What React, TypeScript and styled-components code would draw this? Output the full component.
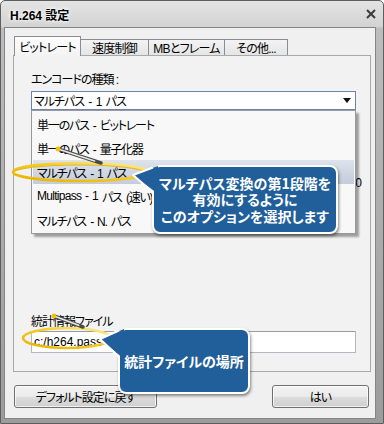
import styled, { createGlobalStyle } from "styled-components";

const GlobalStyle = createGlobalStyle`
  html, body { margin: 0; padding: 0; background: #ffffff; }
  body {
    font-family: "Liberation Sans", "Noto Sans CJK JP", sans-serif;
    font-size: 12px;
    color: #000;
    font-feature-settings: "palt";
  }
  * { box-sizing: border-box; }
`;

const Window = styled.div`
  position: relative;
  width: 384px;
  height: 424px;
  display: flex;
  flex-direction: column;
  border: 1px solid #5e5e5e;
  border-radius: 5px 5px 0 0;
  padding: 0 7px 4px 3px;
  background: linear-gradient(#e4e4e4 0, #d2d2d2 26px, #bdbdbd 27px, #9c9c9c 100%);
  overflow: hidden;
`;

const TitleBar = styled.div`
  height: 26px;
  display: flex;
  align-items: center;
  justify-content: space-between;
  padding-left: 6px;
`;

const Title = styled.span`
  font-weight: bold;
  font-size: 12px;
  text-shadow: 0 0 5px #fff, 0 0 3px #fff;
`;

const Client = styled.div`
  flex: 1;
  display: flex;
  flex-direction: column;
  background: #f0f0f0;
  border: 1px solid #858585;
  padding: 8px 4px 0 8px;
`;

const TabRow = styled.div`
  height: 19px;
  display: flex;
  align-items: flex-end;
`;

const Tab = styled.div<{ $active?: boolean; $w: number }>`
  position: relative;
  z-index: ${(p) => (p.$active ? 2 : 1)};
  width: ${(p) => p.$w}px;
  height: ${(p) => (p.$active ? 20 : 16)}px;
  margin-bottom: ${(p) => (p.$active ? -1 : 0)}px;
  margin-left: -1px;
  display: flex;
  align-items: center;
  justify-content: center;
  letter-spacing: -0.8px;
  border: 1px solid #898c95;
  border-bottom: none;
  background: ${(p) =>
    p.$active
      ? "linear-gradient(#fdfdfd, #f3f3f3)"
      : "linear-gradient(#f3f3f3, #e5e5e5)"};
  color: #000;
  &:first-child { margin-left: 1px; }
`;

const Panel = styled.div`
  position: relative;
  height: 317px;
  display: flex;
  flex-direction: column;
  border: 1px solid #a9a9a9;
  background: #f2f2f2;
  padding: 17px 14px 18px 17px;
`;

const FieldLabel = styled.div`
  height: 15px;
  line-height: 15px;
  letter-spacing: -1px;
`;

const ComboWrap = styled.div`
  position: relative;
  margin-top: 3px;
`;

const Combo = styled.div`
  height: 19px;
  display: flex;
  align-items: center;
  justify-content: space-between;
  padding: 0 4px 0 2px;
  letter-spacing: -1px;
  word-spacing: 2px;
  background: #fff;
  border: 1px solid #6f84ad;
`;

const DropList = styled.div`
  position: absolute;
  z-index: 5;
  top: 100%;
  left: 0;
  width: 100%;
  padding: 1px;
  background: #f8f8f8;
  border: 1px solid #9a9a9a;
  box-shadow: 3px 3px 2px rgba(0, 0, 0, 0.35);
`;

const DropItem = styled.div<{ $selected?: boolean }>`
  height: 24px;
  display: flex;
  align-items: center;
  padding-left: 4px;
  letter-spacing: -1.2px;
  word-spacing: 2px;
  white-space: pre;
  background: ${(p) =>
    p.$selected ? "linear-gradient(#dde3ec, #c4ccda)" : "transparent"};
`;

const Latin = styled.span`
  letter-spacing: -0.7px;
  word-spacing: 1px;
`;

const ValueRow = styled.div`
  margin-top: 66px;
  margin-right: -6px;
  height: 14px;
  line-height: 14px;
  text-align: right;
`;

const StatsBlock = styled.div`
  margin-top: auto;
`;

const TextInput = styled.div`
  margin-top: 1px;
  height: 22px;
  display: flex;
  align-items: center;
  padding-left: 2px;
  background: #fff;
  border: 1px solid #b5b7bd;
  border-top-color: #9a9ca3;
`;

const ButtonRow = styled.div`
  display: flex;
  justify-content: space-between;
  margin-top: 13px;
  padding: 0 2px 0 1px;
`;

const Button = styled.div<{ $w: number }>`
  width: ${(p) => p.$w}px;
  height: 23px;
  display: flex;
  align-items: center;
  justify-content: center;
  letter-spacing: -1px;
  border: 1px solid #707070;
  border-radius: 3px;
  background: linear-gradient(#f2f2f2 0%, #ebebeb 50%, #dddddd 51%, #cfcfcf 100%);
  box-shadow: inset 0 0 0 1px rgba(255, 255, 255, 0.7);
`;

const Overlay = styled.svg`
  position: absolute;
  left: -1px;
  top: -1px;
  z-index: 8;
  pointer-events: none;
`;

const Callout = styled.div<{ $x: number; $y: number; $w: number; $h: number }>`
  position: absolute;
  z-index: 9;
  left: ${(p) => p.$x - 1}px;
  top: ${(p) => p.$y - 1}px;
  width: ${(p) => p.$w}px;
  height: ${(p) => p.$h}px;
  display: flex;
  align-items: center;
  justify-content: center;
  text-align: center;
  background: #215f9a;
  border: 2px solid #fff;
  border-radius: 8px;
  box-shadow: 1px 2px 3px rgba(0, 0, 0, 0.45);
  color: #fff;
  font-family: "Noto Sans CJK JP", sans-serif;
  font-weight: bold;
  font-size: 14px;
  line-height: 16.5px;
`;

const Tail = styled.svg`
  position: absolute;
  overflow: visible;
`;

const Stick = ({ x1, y1, x2, y2 }: { x1: number; y1: number; x2: number; y2: number }) => (
  <g>
    <line x1={x1} y1={y1} x2={x2} y2={y2} stroke="#4a4a4a" strokeWidth={3.5} strokeLinecap="round" />
    <line x1={x1} y1={y1} x2={x2 - (x2 - x1) * 0.15} y2={y2 - (y2 - y1) * 0.15} stroke="#e6e6e6" strokeWidth={1.6} strokeLinecap="round" />
    <circle cx={x1} cy={y1} r={2.4} fill="#f2c200" />
  </g>
);

export default function App() {
  return (
    <>
      <GlobalStyle />
      <Window>
        <TitleBar>
          <Title>H.264 設定</Title>
          <svg width="10" height="10" viewBox="0 0 10 10">
            <path d="M1 1 L9 9 M9 1 L1 9" stroke="#3c3c3c" strokeWidth="2" />
          </svg>
        </TitleBar>
        <Client>
          <TabRow>
            <Tab $active $w={67}>ビットレート</Tab>
            <Tab $w={69}>速度制御</Tab>
            <Tab $w={77}>MBとフレーム</Tab>
            <Tab $w={64}>その他...</Tab>
          </TabRow>
          <Panel>
            <FieldLabel>エンコードの種類 :</FieldLabel>
            <ComboWrap>
              <Combo>
                <span>マルチパス - 1 パス</span>
                <svg width="8" height="5" viewBox="0 0 8 5">
                  <path d="M0 0 H8 L4 5 Z" fill="#111" />
                </svg>
              </Combo>
              <DropList>
                <DropItem>単一のパス - ビットレート</DropItem>
                <DropItem>単一のパス - 量子化器</DropItem>
                <DropItem $selected>マルチパス - 1 パス</DropItem>
                <DropItem>
                  <Latin>Multipass - 1</Latin> パス (速い)
                </DropItem>
                <DropItem>マルチパス - N. パス</DropItem>
              </DropList>
            </ComboWrap>
            <ValueRow>0</ValueRow>
            <StatsBlock>
              <FieldLabel>統計情報ファイル</FieldLabel>
              <TextInput>c:/h264.pass</TextInput>
            </StatsBlock>
          </Panel>
          <ButtonRow>
            <Button $w={143}>デフォルト設定に戻す</Button>
            <Button $w={97}>はい</Button>
          </ButtonRow>
        </Client>

        <Overlay width="384" height="424" viewBox="0 0 384 424">
          <defs>
            <linearGradient id="ring" x1="0" y1="1" x2="1" y2="0">
              <stop offset="0" stopColor="#e9b100" />
              <stop offset="0.6" stopColor="#f6cd2a" />
              <stop offset="1" stopColor="#fff0a8" />
            </linearGradient>
          </defs>
          <ellipse cx="80" cy="172" rx="67" ry="9" fill="none" stroke="url(#ring)" strokeWidth="2.6" />
          <ellipse cx="79" cy="173" rx="66" ry="8" fill="none" stroke="#eab800" strokeWidth="1" strokeDasharray="0 110 160 400" />
          <Stick x1={58} y1={149} x2={101} y2={163} />
          <ellipse cx="67" cy="338" rx="44" ry="10" fill="none" stroke="url(#ring)" strokeWidth="2.6" />
          <Stick x1={54} y1={316} x2={83} y2={327} />
        </Overlay>

        <Callout $x={152} $y={165} $w={186} $h={69}>
          <Tail width="28" height="32" style={{ left: -24, top: -2 }}>
            <polygon points="3,10 28,1 28,29" fill="#215f9a" />
            <polyline points="23,2.5 3,10 23,27.5" fill="none" stroke="#fff" strokeWidth="2" strokeLinejoin="round" />
          </Tail>
          <div>
            マルチパス変換の第1段階を
            <br />
            有効にするように
            <br />
            このオプションを選択します
          </div>
        </Callout>

        <Callout $x={118} $y={328} $w={132} $h={66}>
          <Tail width="26" height="32" style={{ left: -22, top: -2 }}>
            <polygon points="2,11 26,1 26,31" fill="#215f9a" />
            <polyline points="21,2.5 2,11 21,29" fill="none" stroke="#fff" strokeWidth="2" strokeLinejoin="round" />
          </Tail>
          <div>統計ファイルの場所</div>
        </Callout>
      </Window>
    </>
  );
}
